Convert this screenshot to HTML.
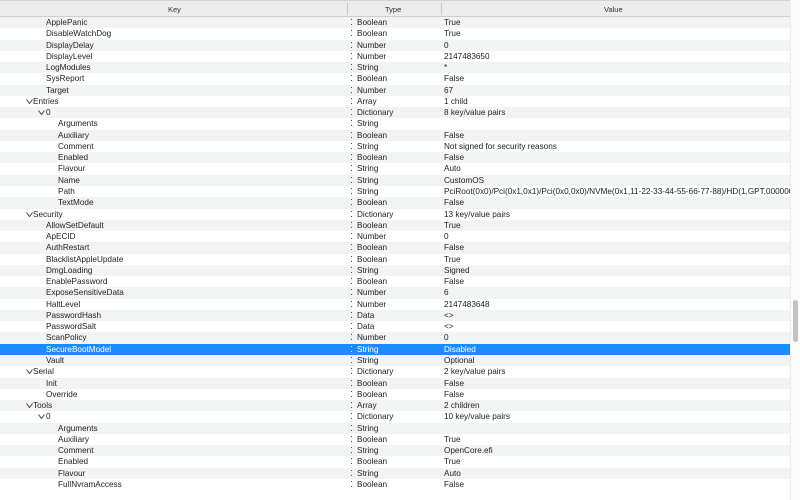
<!DOCTYPE html>
<html><head><meta charset="utf-8"><style>
*{margin:0;padding:0;box-sizing:border-box}
body{width:800px;height:500px;overflow:hidden;background:#fff;font-family:"Liberation Sans",sans-serif;font-size:8.2px;color:#222;position:relative}
.hdr{position:absolute;left:0;top:0;width:790px;height:17px;background:#ececec;border-top:1px solid #d4d4d4;border-bottom:1px solid #cfcfcf}
.hdr span{position:absolute;top:4px;color:#333;font-size:7.5px}
.hs{position:absolute;top:2px;width:1px;height:12px;background:#c8c8c8}
.rows{position:absolute;left:0;top:17px;width:790px}
.r{height:11.27px;position:relative;line-height:11.27px;white-space:nowrap}
.r:nth-child(odd){background:#f2f3f3}
.r.sel{background:#1c8bfd;color:#fff}
.k,.t,.v{position:absolute;top:0}
.t{left:351px}
.t:before{content:"";display:inline-block;width:1px;height:4px;border-top:1px solid currentColor;border-bottom:1px solid currentColor;margin-right:5px;vertical-align:0px;opacity:.8}
.v{left:444px;width:346px;overflow:hidden}
.c{position:absolute;top:3px;width:7px;height:5px}
.sb{position:absolute;left:790px;top:0;width:10px;height:500px;background:#fafafa;border-left:1px solid #ededed}
.th{position:absolute;left:793px;top:300px;width:5px;height:42px;border-radius:3px;background:#c2c2c2}
</style></head><body>
<div class="hdr"><span style="left:168px">Key</span><div class="hs" style="left:347px"></div><span style="left:385px">Type</span><div class="hs" style="left:441px"></div><span style="left:604px">Value</span></div>
<div class="rows">
<div class="r"><span class="k" style="left:46px">ApplePanic</span><span class="t">Boolean</span><span class="v">True</span></div>
<div class="r"><span class="k" style="left:46px">DisableWatchDog</span><span class="t">Boolean</span><span class="v">True</span></div>
<div class="r"><span class="k" style="left:46px">DisplayDelay</span><span class="t">Number</span><span class="v">0</span></div>
<div class="r"><span class="k" style="left:46px">DisplayLevel</span><span class="t">Number</span><span class="v">2147483650</span></div>
<div class="r"><span class="k" style="left:46px">LogModules</span><span class="t">String</span><span class="v">*</span></div>
<div class="r"><span class="k" style="left:46px">SysReport</span><span class="t">Boolean</span><span class="v">False</span></div>
<div class="r"><span class="k" style="left:46px">Target</span><span class="t">Number</span><span class="v">67</span></div>
<div class="r"><svg class="c" style="left:26px" viewBox="0 0 7 5"><path d="M0.5 0.5L3.5 4.5L6.5 0.5" fill="none" stroke="#444" stroke-width="1"/></svg><span class="k" style="left:33px">Entries</span><span class="t">Array</span><span class="v">1 child</span></div>
<div class="r"><svg class="c" style="left:38px" viewBox="0 0 7 5"><path d="M0.5 0.5L3.5 4.5L6.5 0.5" fill="none" stroke="#444" stroke-width="1"/></svg><span class="k" style="left:46px">0</span><span class="t">Dictionary</span><span class="v">8 key/value pairs</span></div>
<div class="r"><span class="k" style="left:58px">Arguments</span><span class="t">String</span><span class="v"></span></div>
<div class="r"><span class="k" style="left:58px">Auxiliary</span><span class="t">Boolean</span><span class="v">False</span></div>
<div class="r"><span class="k" style="left:58px">Comment</span><span class="t">String</span><span class="v">Not signed for security reasons</span></div>
<div class="r"><span class="k" style="left:58px">Enabled</span><span class="t">Boolean</span><span class="v">False</span></div>
<div class="r"><span class="k" style="left:58px">Flavour</span><span class="t">String</span><span class="v">Auto</span></div>
<div class="r"><span class="k" style="left:58px">Name</span><span class="t">String</span><span class="v">CustomOS</span></div>
<div class="r"><span class="k" style="left:58px">Path</span><span class="t">String</span><span class="v">PciRoot(0x0)/Pci(0x1,0x1)/Pci(0x0,0x0)/NVMe(0x1,11-22-33-44-55-66-77-88)/HD(1,GPT,00000000-0000</span></div>
<div class="r"><span class="k" style="left:58px">TextMode</span><span class="t">Boolean</span><span class="v">False</span></div>
<div class="r"><svg class="c" style="left:26px" viewBox="0 0 7 5"><path d="M0.5 0.5L3.5 4.5L6.5 0.5" fill="none" stroke="#444" stroke-width="1"/></svg><span class="k" style="left:33px">Security</span><span class="t">Dictionary</span><span class="v">13 key/value pairs</span></div>
<div class="r"><span class="k" style="left:46px">AllowSetDefault</span><span class="t">Boolean</span><span class="v">True</span></div>
<div class="r"><span class="k" style="left:46px">ApECID</span><span class="t">Number</span><span class="v">0</span></div>
<div class="r"><span class="k" style="left:46px">AuthRestart</span><span class="t">Boolean</span><span class="v">False</span></div>
<div class="r"><span class="k" style="left:46px">BlacklistAppleUpdate</span><span class="t">Boolean</span><span class="v">True</span></div>
<div class="r"><span class="k" style="left:46px">DmgLoading</span><span class="t">String</span><span class="v">Signed</span></div>
<div class="r"><span class="k" style="left:46px">EnablePassword</span><span class="t">Boolean</span><span class="v">False</span></div>
<div class="r"><span class="k" style="left:46px">ExposeSensitiveData</span><span class="t">Number</span><span class="v">6</span></div>
<div class="r"><span class="k" style="left:46px">HaltLevel</span><span class="t">Number</span><span class="v">2147483648</span></div>
<div class="r"><span class="k" style="left:46px">PasswordHash</span><span class="t">Data</span><span class="v">&lt;&gt;</span></div>
<div class="r"><span class="k" style="left:46px">PasswordSalt</span><span class="t">Data</span><span class="v">&lt;&gt;</span></div>
<div class="r"><span class="k" style="left:46px">ScanPolicy</span><span class="t">Number</span><span class="v">0</span></div>
<div class="r sel"><span class="k" style="left:46px">SecureBootModel</span><span class="t">String</span><span class="v">Disabled</span></div>
<div class="r"><span class="k" style="left:46px">Vault</span><span class="t">String</span><span class="v">Optional</span></div>
<div class="r"><svg class="c" style="left:26px" viewBox="0 0 7 5"><path d="M0.5 0.5L3.5 4.5L6.5 0.5" fill="none" stroke="#444" stroke-width="1"/></svg><span class="k" style="left:33px">Serial</span><span class="t">Dictionary</span><span class="v">2 key/value pairs</span></div>
<div class="r"><span class="k" style="left:46px">Init</span><span class="t">Boolean</span><span class="v">False</span></div>
<div class="r"><span class="k" style="left:46px">Override</span><span class="t">Boolean</span><span class="v">False</span></div>
<div class="r"><svg class="c" style="left:26px" viewBox="0 0 7 5"><path d="M0.5 0.5L3.5 4.5L6.5 0.5" fill="none" stroke="#444" stroke-width="1"/></svg><span class="k" style="left:33px">Tools</span><span class="t">Array</span><span class="v">2 children</span></div>
<div class="r"><svg class="c" style="left:38px" viewBox="0 0 7 5"><path d="M0.5 0.5L3.5 4.5L6.5 0.5" fill="none" stroke="#444" stroke-width="1"/></svg><span class="k" style="left:46px">0</span><span class="t">Dictionary</span><span class="v">10 key/value pairs</span></div>
<div class="r"><span class="k" style="left:58px">Arguments</span><span class="t">String</span><span class="v"></span></div>
<div class="r"><span class="k" style="left:58px">Auxiliary</span><span class="t">Boolean</span><span class="v">True</span></div>
<div class="r"><span class="k" style="left:58px">Comment</span><span class="t">String</span><span class="v">OpenCore.efi</span></div>
<div class="r"><span class="k" style="left:58px">Enabled</span><span class="t">Boolean</span><span class="v">True</span></div>
<div class="r"><span class="k" style="left:58px">Flavour</span><span class="t">String</span><span class="v">Auto</span></div>
<div class="r"><span class="k" style="left:58px">FullNvramAccess</span><span class="t">Boolean</span><span class="v">False</span></div>
</div>
<div class="sb"></div><div class="th"></div>
</body></html>
